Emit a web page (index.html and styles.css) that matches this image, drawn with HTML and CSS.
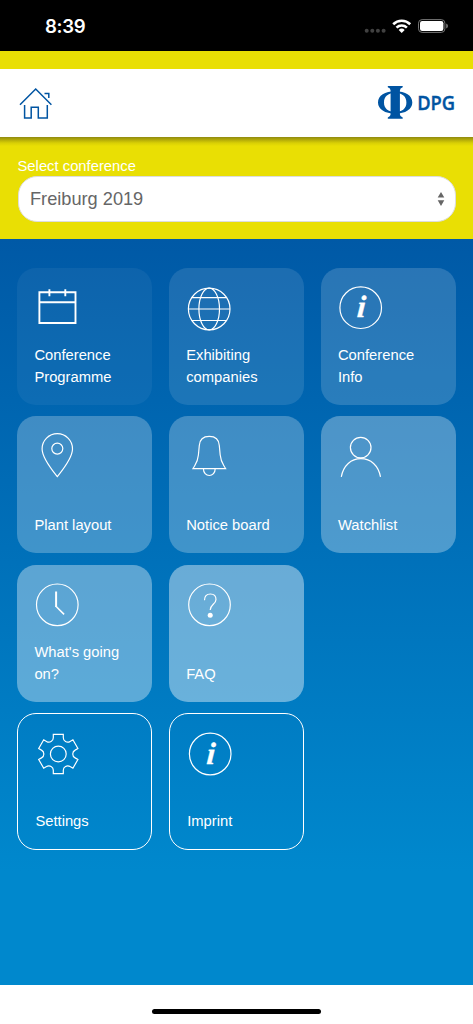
FILE: index.html
```html
<!DOCTYPE html>
<html lang="en">
<head>
<meta charset="utf-8">
<title>DPG Conference</title>
<link rel="stylesheet" href="styles.css">
</head>
<body>
<div class="screen">
  <div class="statusbar">
    <span class="time">8:39</span>
    <svg class="indicators" width="88" height="20" viewBox="362 16 88 20">
      <g fill="#414141"><circle cx="366.7" cy="30.8" r="2"/><circle cx="372.3" cy="30.8" r="2"/><circle cx="377.9" cy="30.8" r="2"/><circle cx="383.6" cy="30.8" r="2"/></g>
      <g fill="none" stroke="#fff" stroke-width="2.6">
        <path d="M393.2 24.2A12.2 12.2 0 0 1 410.2 24.2"/>
        <path d="M396.5 27.6A7.5 7.5 0 0 1 406.9 27.6"/>
      </g>
      <path d="M398.7 29.9A4.3 4.3 0 0 1 404.7 29.9L401.7 32.9Z" fill="#fff"/>
      <rect x="418.5" y="19.6" width="26.4" height="12.8" rx="3.6" fill="none" stroke="#777" stroke-width="1"/>
      <rect x="420" y="21.1" width="23.4" height="9.8" rx="2.2" fill="#fff"/>
      <path d="M446.2 23.6Q448 24.4 448 26T446.2 28.4Z" fill="#777"/>
    </svg>
  </div>
  <div class="strip"></div>
  <header class="header">
    <svg class="home" width="34" height="34" viewBox="19 87 34 34">
      <path d="M20 104.8L35.7 89L51.4 104.8M24.6 105V118H31.2V107.2H38.3V118H47.3V105M44.5 93.6H48.8V98" fill="none" stroke="#0054a2" stroke-width="1.5"/>
    </svg>
    <svg class="logo" width="80" height="36" viewBox="377 84 80 36">
      <g fill="#0054a2">
        <path fill-rule="evenodd" d="M395.2 91.3C405.5 91.3 412.3 95.6 412.3 102.4S405.5 113.5 395.2 113.5S378 109.2 378 102.4S384.9 91.3 395.2 91.3ZM395.2 93C388 93 384 96.4 384 102.4S388 111.8 395.2 111.8S406.4 108.4 406.4 102.4S402.4 93 395.2 93Z"/>
        <path d="M387.8 86H402.7V87.3Q399.9 88 399.9 90.5V114.3Q399.9 116.8 402.7 117.5V118.8H387.8V117.5Q390.6 116.8 390.6 114.3V90.5Q390.6 88 387.8 87.3Z"/>
      </g>
      <text class="logo-text" transform="translate(417.2 109.7) scale(.9 1)">DPG</text>
    </svg>
  </header>
  <section class="picker">
    <div class="label">Select conference</div>
    <div class="select"><span>Freiburg 2019</span>
      <svg width="8" height="14" viewBox="0 0 8 14"><path d="M4 0L7.3 5.6H.7ZM4 14L7.3 8.2H.7Z" fill="#666"/></svg>
    </div>
  </section>
  <main class="tiles">
    <a class="tile t1">
      <svg class="icon" viewBox="0 0 50 50"><path stroke-width="1.9" d="M6.9 9.3H43V40H6.9ZM6.9 19.3H43M16.9 6.3V13.3M32.8 6.3V13.3"/></svg>
      <span>Conference Programme</span></a>
    <a class="tile t2">
      <svg class="icon" viewBox="0 0 50 50"><circle cx="24.7" cy="26" r="20.8"/><ellipse cx="24.7" cy="26" rx="10.3" ry="20.8"/><path d="M3.9 26H45.5M7.2 14.7H42.2M7.2 37.5H42.2"/></svg>
      <span>Exhibiting companies</span></a>
    <a class="tile t3">
      <svg class="icon last" viewBox="0 0 50 50"><circle cx="24.7" cy="24.7" r="20.8"/><text transform="translate(24.9 34.4) skewX(-4)">i</text></svg>
      <span>Conference Info</span></a>
    <a class="tile t4">
      <svg class="icon" viewBox="0 0 50 50"><path d="M24.8 45.6C20 39.5 9.6 27 9.6 17.9A15.2 15.2 0 0 1 40 17.9C40 27 29.6 39.5 24.8 45.6Z"/><circle cx="24.8" cy="17.6" r="5.5"/></svg>
      <span>Plant layout</span></a>
    <a class="tile t5">
      <svg class="icon" viewBox="0 0 50 50"><path d="M8.5 37.6C11 33 13.2 31.5 13.9 24L14.8 14.5C15.2 8 18.5 5.3 24.8 5.3S34.4 8 34.8 14.5L35.7 24C36.4 31.5 38.6 33 41.1 37.6ZM18.9 37.8A5.9 6.7 0 0 0 30.7 37.8"/></svg>
      <span>Notice board</span></a>
    <a class="tile t6">
      <svg class="icon last" viewBox="0 0 50 50"><circle cx="24.7" cy="16.6" r="10.3"/><path d="M5.3 45.8C7.5 34.5 15 27.7 24.9 27.7S42.3 34.5 44.5 45.8"/></svg>
      <span>Watchlist</span></a>
    <a class="tile t7">
      <svg class="icon" viewBox="0 0 50 50"><circle cx="24.8" cy="24.8" r="20.8"/><path stroke-width="2" d="M23.6 11.5V27"/><path stroke-width="1.5" d="M23.4 26.2L31.6 34.4"/></svg>
      <span>What's going on?</span></a>
    <a class="tile t8">
      <svg class="icon" viewBox="0 0 50 50"><circle cx="25" cy="24.8" r="20.8"/><path d="M20 20.2C20 16.3 22.1 14 25.9 14S31.5 16.3 31.5 19.4C31.5 24 25.7 24.6 25.7 29.9"/><circle class="dot" cx="25.7" cy="35.2" r="2.5"/></svg>
      <span>FAQ</span></a>
    <a class="tile outlined row-start">
      <svg class="icon" viewBox="-24.8 -25 50 50"><path d="M5-16.5V-19.7H-5V-16.5A4.4 4.4 0 0 1-11.8-12.6L-14.6-14.2L-19.6-5.5L-16.8-3.9A4.4 4.4 0 0 1-16.8 3.9L-19.6 5.5L-14.6 14.2L-11.8 12.6A4.4 4.4 0 0 1-5 16.5V19.7H5V16.5A4.4 4.4 0 0 1 11.8 12.6L14.6 14.2L19.6 5.5L16.8 3.9A4.4 4.4 0 0 1 16.8-3.9L19.6-5.5L14.6-14.2L11.8-12.6A4.4 4.4 0 0 1 5-16.5Z"/><circle r="7.9"/></svg>
      <span>Settings</span></a>
    <a class="tile outlined">
      <svg class="icon" viewBox="0 0 50 50"><circle cx="24.7" cy="25" r="20.8"/><text transform="translate(24.7 34.6) skewX(-4)">i</text></svg>
      <span>Imprint</span></a>
  </main>
  <footer class="homebar"><div class="handle"></div></footer>
</div>
</body>
</html>
```
FILE: styles.css
```css
* { box-sizing: border-box; }
body { margin: 0; font-family: "Liberation Sans", Arial, sans-serif; }
.screen { width: 473px; height: 1024px; display: flex; flex-direction: column; overflow: hidden; background: #fff; }
.statusbar { height: 50.5px; flex: none; background: #000; display: flex; justify-content: space-between; padding: 16px 23px 0 45px; }
.time { color: #fff; font: 600 18.6px/21px Inter, sans-serif; letter-spacing: -.3px; }
.strip { height: 18.5px; flex: none; background: #e9df04; }
.header { height: 68px; flex: none; background: #fff; display: flex; justify-content: space-between; padding: 18px 16px 0 19px; }
.logo { margin-top: -3px; overflow: visible; }
.logo-text { font: 600 20.3px "Open Sans", "Noto Sans", sans-serif; fill: #0054a2; stroke: #0054a2; stroke-width: .4; }
.picker { height: 102px; flex: none; padding: 21px 17.5px 0; background: linear-gradient(#908a10 0, #b5ad08 3px, #d8cf05 6px, #e9df04 9px); }
.label { color: #fff; font-size: 14.8px; line-height: 17px; }
.select { margin-top: 1px; height: 46px; border: 1px solid #ddd; border-radius: 19px; background: #fff; color: #666; font-size: 18.2px; display: flex; align-items: center; justify-content: space-between; padding: 0 10px 0 11.5px; }
.select svg { margin-bottom: 1px; }
.tiles { flex: 1; display: grid; grid-template-columns: repeat(3, 134.7px); grid-auto-rows: 137px; gap: 11.5px 17.1px; align-content: start; padding: 28.7px 17.4px 0; background: linear-gradient(#0059a6 0, #0088cd 632px); }
.tile { display: flex; flex-direction: column; justify-content: space-between; align-items: flex-start; border-radius: 19px; padding: 15px 17px 16px 15px; color: #fff; font-size: 14.75px; line-height: 21.7px; }
.tile span { padding-left: 2px; width: 98px; }
.icon { width: 50px; height: 50px; flex: none; margin-left: .4px; transform: translateX(-.5px); fill: none; stroke: #fff; stroke-width: 1.2; }
.icon.last { transform: none; }
.icon text { fill: #fff; stroke: #fff; stroke-width: .3; font: italic 700 31px "Liberation Serif", serif; text-anchor: middle; }
.icon .dot { fill: #fff; stroke: none; }
.t1 { background: rgba(255,255,255,.05); }
.t2 { background: rgba(255,255,255,.11); }
.t3 { background: rgba(255,255,255,.16); }
.t4 { background: rgba(255,255,255,.25); }
.t5 { background: rgba(255,255,255,.25); }
.t6 { background: rgba(255,255,255,.3); }
.t7 { background: rgba(255,255,255,.36); }
.t8 { background: rgba(255,255,255,.41); }
.outlined { border: 1.2px solid #fff; }
.row-start { grid-column: 1; }
.homebar { height: 39.3px; flex: none; background: #fff; display: flex; justify-content: center; padding-top: 24px; }
.handle { width: 169px; height: 5.5px; border-radius: 3px; background: #000; }
```
